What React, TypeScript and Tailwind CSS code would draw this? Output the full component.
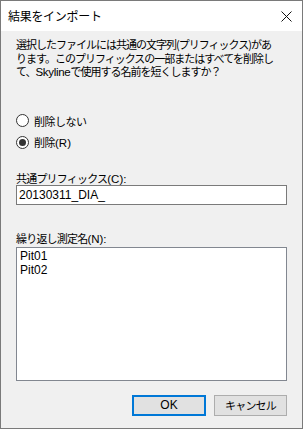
import React from 'react';

const jp = { fontFamily: '"Noto Sans CJK JP", "Noto Sans", sans-serif' };
const latin = { fontFamily: '"Liberation Sans", sans-serif' };

const Radio: React.FC<{ checked?: boolean; label: React.ReactNode }> = ({ checked, label }) => (
  <div className="flex items-center h-[16px]">
    <span className="w-[13px] h-[13px] rounded-full border border-[#333333] bg-white flex items-center justify-center">
      {checked && <span className="w-[7px] h-[7px] rounded-full bg-[#333333]" />}
    </span>
    <span className="ml-[5px] text-[11px] tracking-[-0.5px] leading-[16px]">{label}</span>
  </div>
);

export default function App() {
  return (
    <div className="w-[303px] h-[429px] border border-[#7a7a7a] bg-[#f0f0f0] flex flex-col text-black" style={jp}>
      {/* Title bar */}
      <div className="h-[30px] bg-white flex items-center justify-between pl-[7px] pr-[10px]">
        <span className="text-[12px] tracking-[-0.3px]">結果をインポート</span>
        <svg width="11" height="11" viewBox="0 0 11 11">
          <path d="M0.5 0.5 L10.5 10.5 M10.5 0.5 L0.5 10.5" stroke="#111" strokeWidth="1" />
        </svg>
      </div>

      <div className="flex-1 flex flex-col px-[15px]">
        <div className="mt-[7px] text-[11px] leading-[13.5px] tracking-[-1px]">
          <div className="h-[13.5px]">選択したファイルには共通の文字列(プリフィックス)があ</div>
          <div className="h-[13.5px]">ります。このプリフィックスの一部またはすべてを削除し</div>
          <div className="h-[13.5px]">
            て、<span style={latin} className="tracking-[-0.3px] text-[11.5px]">Skyline</span>で使用する名前を短くしますか？
          </div>
        </div>

        <div className="mt-[34px] flex flex-col gap-[6px]">
          <Radio label="削除しない" />
          <Radio checked label={<>削除<span style={latin} className="text-[11.5px] tracking-normal">(R)</span></>} />
        </div>

        <div className="mt-[20px] text-[11px] tracking-[-0.8px] h-[14px] leading-[14px]">
          共通プリフィックス<span style={latin} className="text-[11.5px] tracking-normal">(C):</span>
        </div>
        <div
          className="h-[20px] border border-[#7a7a7a] bg-white flex items-center px-[2px] text-[12px]"
          style={latin}
        >
          20130311_DIA_
        </div>

        <div className="mt-[26px] text-[11px] tracking-[-0.8px] h-[14px] leading-[14px]">
          繰り返し測定名<span style={latin} className="text-[11.5px] tracking-normal">(N):</span>
        </div>
        <div
          className="mt-[2px] h-[134px] border border-[#828790] bg-white px-[3px] pt-[1px] text-[12px] leading-[14px]"
          style={latin}
        >
          <div>Pit01</div>
          <div>Pit02</div>
        </div>

        <div className="mt-[14px] flex justify-end gap-[8px]">
          <button
            className="w-[74px] h-[21px] bg-[#e1e1e1] border-2 border-[#0078d7] text-[12px] flex items-center justify-center"
            style={latin}
          >
            OK
          </button>
          <button className="w-[73px] h-[21px] bg-[#e1e1e1] border border-[#adadad] text-[11px] tracking-[-0.8px] flex items-center justify-center">
            キャンセル
          </button>
        </div>
      </div>
    </div>
  );
}
